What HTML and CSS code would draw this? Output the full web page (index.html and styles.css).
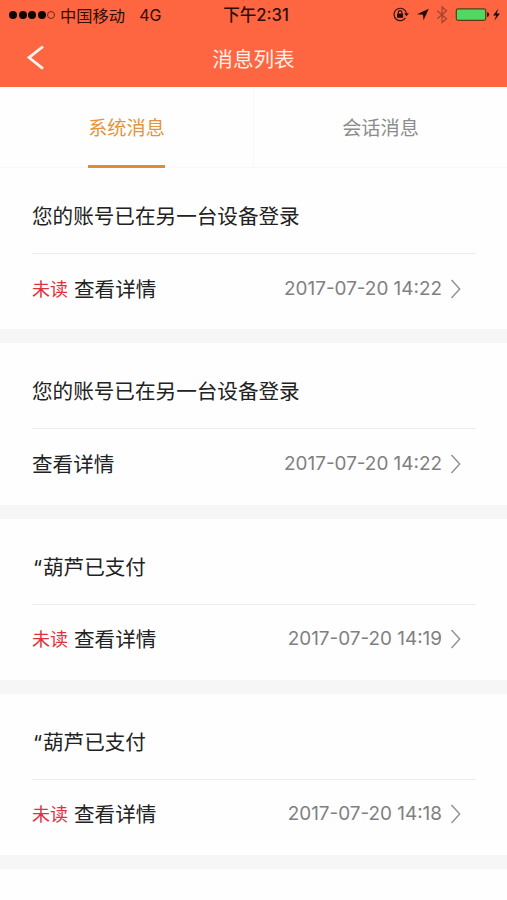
FILE: index.html
```
<!DOCTYPE html>
<html lang="zh-CN">
<head>
    <meta charset="UTF-8">
    <meta name="viewport" content="width=device-width, initial-scale=1.0">
    <title>消息列表</title>
    <link rel="stylesheet" href="styles.css">
</head>
<body>

<header class="header">
    <div class="status-bar">
        <div class="status-left">
            <div class="signal">
                <i></i><i></i><i></i><i></i><i class="empty"></i>
            </div>
            <span class="carrier">中国移动</span>
            <span class="network">4G</span>
        </div>
        <div class="status-time">下午2:31</div>
        <div class="status-right">
            <svg width="115" height="30" viewBox="-8 0 115 30">
                <!-- rotation lock -->
                <path d="M5.2 10.7a6.2 6.2 0 1 0 .2 7.2M5.2 10.7q1.4 1.6 1.2 4" fill="none" stroke="#351510" stroke-width="1.2"/>
                <path d="M4 13.3h5l-2.5 3z" fill="#351510"/>
                <rect x="-2.9" y="13.4" width="6" height="4.4" rx=".5" fill="#200b08"/>
                <path d="M-1.7 13.8v-1.4a1.8 1.8 0 0 1 3.6 0v1.4" fill="none" stroke="#200b08" stroke-width="1.1"/>
                <!-- location -->
                <path d="M28.8 8.8L17 14.3l6 .4.5 5.6z" fill="#200b08"/>
                <!-- bluetooth -->
                <path d="M37.3 10.8l9.2 8-4.4 3.8V7l4.4 3.8-9.2 8" fill="none" stroke="#a4452f" stroke-width="1.3"/>
                <!-- battery -->
                <rect x="56.3" y="8.8" width="29.4" height="11.6" rx="1.8" fill="#50d860" stroke="#5e3a18" stroke-width="1.2"/>
                <path d="M87 12.3q2.2 0 2.2 2.3T87 16.9z" fill="#351510"/>
                <path d="M98.4 8.6l-5.4 6.8h3.2l-1.9 5.4 5.7-7.2h-3.3z" fill="#200b08"/>
            </svg>
        </div>
    </div>
    <div class="nav-bar">
        <svg class="back" width="20" height="28" viewBox="0 0 20 28">
            <path d="M17 2.5L3 13.6 17 24.7" fill="none" stroke="#fff3ec" stroke-width="2.8"/>
        </svg>
        <h1>消息列表</h1>
    </div>
</header>

<nav class="tabs">
    <div class="tab active"><span>系统消息</span></div>
    <div class="tab"><span>会话消息</span></div>
</nav>

<main class="list">
    <section class="item">
        <div class="item-title">您的账号已在另一台设备登录</div>
        <div class="item-row">
            <span class="unread">未读</span>
            <span class="detail">查看详情</span>
            <span class="date">2017-07-20 14:22</span>
            <svg class="arrow" width="12" height="20" viewBox="0 0 12 20"><path d="M1.5 1l8.2 9-8.2 9"/></svg>
        </div>
    </section>

    <section class="item">
        <div class="item-title">您的账号已在另一台设备登录</div>
        <div class="item-row">
            <span class="detail">查看详情</span>
            <span class="date">2017-07-20 14:22</span>
            <svg class="arrow" width="12" height="20" viewBox="0 0 12 20"><path d="M1.5 1l8.2 9-8.2 9"/></svg>
        </div>
    </section>

    <section class="item">
        <div class="item-title"><span class="quote">“</span>葫芦已支付</div>
        <div class="item-row">
            <span class="unread">未读</span>
            <span class="detail">查看详情</span>
            <span class="date">2017-07-20 14:19</span>
            <svg class="arrow" width="12" height="20" viewBox="0 0 12 20"><path d="M1.5 1l8.2 9-8.2 9"/></svg>
        </div>
    </section>

    <section class="item">
        <div class="item-title"><span class="quote">“</span>葫芦已支付</div>
        <div class="item-row">
            <span class="unread">未读</span>
            <span class="detail">查看详情</span>
            <span class="date">2017-07-20 14:18</span>
            <svg class="arrow" width="12" height="20" viewBox="0 0 12 20"><path d="M1.5 1l8.2 9-8.2 9"/></svg>
        </div>
    </section>
</main>

</body>
</html>
```

FILE: styles.css
```
* {
    box-sizing: border-box;
}

body {
    margin: 0;
    height: 900px;
    overflow: hidden;
    background-color: #fefefe;
    color: #222;
    font-family: "Noto Sans CJK SC", sans-serif;
}

.header {
    height: 87px;
    background-color: #fd6641;
}

.status-bar {
    display: grid;
    grid-template-columns: 1fr auto 1fr;
    align-items: center;
    height: 30px;
    padding-left: 5px;
    color: #2b100b;
    font-size: 16.3px;
    line-height: 28px;
}

.status-left {
    display: flex;
    align-items: center;
    height: 28px;
    margin-left: 4px;
}

.signal {
    display: flex;
    gap: 1.5px;
    margin-right: 5px;
}

.signal i {
    width: 8px;
    height: 8px;
    border-radius: 50%;
    background-color: #120504;
}

.signal .empty {
    background: none;
    border: 1px solid #6b2a1b;
}

.network {
    margin-left: 14px;
    font-family: Inter, sans-serif;
    font-size: 16px;
}

.status-time {
    height: 29px;
    font-family: Inter, "Noto Sans CJK SC", sans-serif;
    font-size: 16.6px;
    font-weight: 500;
}

.status-right {
    display: flex;
    justify-content: flex-end;
}

.nav-bar {
    display: grid;
    grid-template-columns: 60px 1fr 60px;
    align-items: center;
    height: 55px;
}

.back {
    margin-left: 26px;
}

.nav-bar h1 {
    margin: 0;
    color: #fff0e6;
    font-size: 20.6px;
    font-weight: 400;
    line-height: 30px;
    text-align: center;
}

.tabs {
    display: flex;
    height: 81px;
    border-bottom: 1px solid #f7f7f7;
}

.tab {
    flex: 1;
    display: flex;
    justify-content: center;
    color: #8c8c8c;
    font-size: 19.2px;
    line-height: 81px;
}

.tab + .tab {
    border-left: 1px solid #f8f8f8;
}

.tab span {
    height: 81px;
}

.tab.active span {
    color: #e5943c;
    border-bottom: 3px solid #e08c35;
}

.item {
    height: 175.33px;
    padding: 0 31px 0 32px;
    border-bottom: 14px solid #f6f6f6;
}

.item-title {
    height: 86px;
    border-bottom: 1px solid #ededed;
    font-size: 20.6px;
    line-height: 95px;
}

.quote {
    display: inline-block;
    width: 11px;
    padding-left: 1px;
    font-family: Inter, sans-serif;
}

.item-row {
    display: flex;
    align-items: center;
    height: 69px;
    padding-right: 14px;
    line-height: 30px;
}

.unread,
.detail {
    margin-top: -2px;
}

.unread {
    margin-right: 6px;
    color: #e0303a;
    font-size: 18px;
}

.detail {
    font-size: 20.6px;
}

.date {
    margin-left: auto;
    color: #808080;
    font-family: Inter, sans-serif;
    font-size: 18.9px;
}

.arrow {
    margin-left: 8px;
    fill: none;
    stroke: #909090;
    stroke-width: 1.4;
}
```
